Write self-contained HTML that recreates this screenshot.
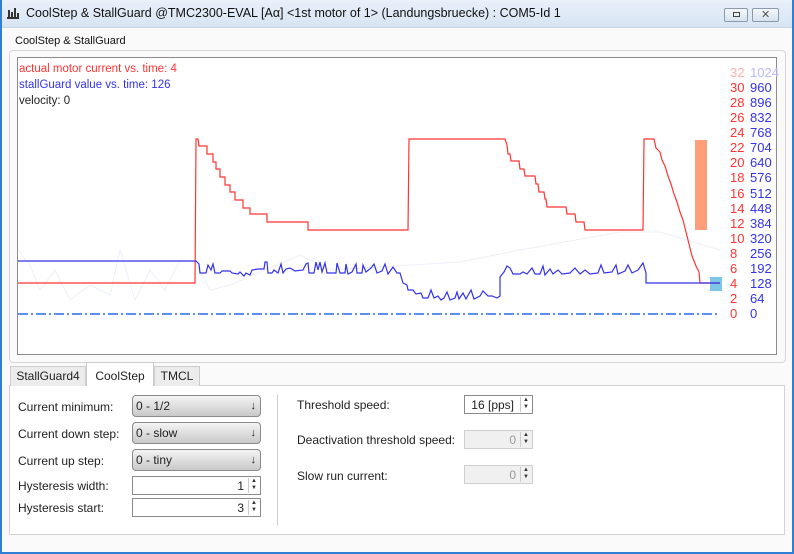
<!DOCTYPE html>
<html><head><meta charset="utf-8"><style>
*{margin:0;padding:0;box-sizing:border-box}
body{width:794px;height:554px;overflow:hidden;background:#fafafa;font-family:"Liberation Sans","DejaVu Sans",sans-serif;font-size:12px;color:#222;position:relative}
.abs{position:absolute}
.title{left:0;top:0;width:794px;height:28px;background:linear-gradient(#e9f1fa,#d7e4f3);border-bottom:1px solid #c9d6e6}
.win{left:0;top:0;width:794px;height:554px;border:2px solid #2f7fd6;border-top:none;pointer-events:none}
.btn{top:8px;width:24px;height:14px;border:1px solid #8a99ad;border-radius:2px;background:linear-gradient(#f4f7fb,#d8e2ee)}
.group{left:9px;top:50px;width:777px;height:313px;border:1px solid #d6d6d6;border-radius:4px}
.chart{left:17px;top:57px;width:760px;height:298px;background:#fff;border:1px solid #8c8c8c}
.tab{top:366px;height:20px;border:1px solid #ccc;border-bottom:none;background:#ececec;font-size:12px;text-align:center;line-height:19px}
.panel{left:9px;top:385px;width:776px;height:150px;border:1px solid #d3d3d3;background:#fff}
.lbl{font-size:12px;color:#222}
.combo{width:129px;height:22px;border:1px solid #8a8a8a;border-radius:4px;background:linear-gradient(#f4f4f4,#c9c9c9);font-size:12px;padding:3px 0 0 3px}
.combo:after{content:"↓";position:absolute;right:4px;top:4px;font-size:11px;font-weight:bold}
.spin{height:19px;border:1px solid #8a8a8a;background:#fff;font-size:12px;text-align:right;padding:2px 16px 0 0}
.spin.dis{border-color:#cfcfcf;background:#f0f0f0;color:#999}
.arr{position:absolute;right:1px;top:1px;width:11px;height:15px;border-left:1px solid #ccc;font-size:6px;line-height:7px;text-align:center;color:#333}
.col{line-height:15.07px;font-size:13px}
</style></head><body>
<div class="abs title"></div>
<div class="abs" style="left:7px;top:7px;width:12px;height:12px;">
<svg width="12" height="12"><rect x="0" y="10" width="12" height="2" fill="#333"/><rect x="1" y="3" width="2" height="7" fill="#333"/><rect x="4" y="5" width="2" height="5" fill="#333"/><rect x="7" y="1" width="2" height="9" fill="#333"/><rect x="10" y="6" width="2" height="4" fill="#333"/></svg></div>
<div class="abs" style="left:26px;top:6px;font-size:12.5px;color:#111">CoolStep &amp; StallGuard @TMC2300-EVAL [Aα] &lt;1st motor of 1&gt; (Landungsbruecke) : COM5-Id 1</div>
<div class="abs btn" style="left:724px"><div class="abs" style="left:8px;top:3px;width:7px;height:5px;border:1px solid #444"></div></div>
<div class="abs btn" style="left:752px;width:27px"><div class="abs" style="left:8px;top:-1px;font-size:11px;color:#555">✕</div></div>
<div class="abs" style="left:15px;top:35px;font-size:11px;color:#111">CoolStep &amp; StallGuard</div>
<div class="abs group"></div>
<div class="abs chart"></div>
<svg class="abs" style="left:0;top:0" width="794" height="554">
<polyline fill="none" stroke="#eef0fa" stroke-width="1" points="18,250 30,265 40,290 55,270 70,300 90,285 110,295 120,250 135,300 150,270 165,290 180,260 195,262 210,290 230,285 300,255 330,270 460,262 520,250 620,232 660,232 720,250"/>
<polyline fill="none" stroke="#5b8ff0" stroke-width="2" stroke-dasharray="10,3,2,3" points="18,314 720,314"/>
<rect x="695" y="140" width="12" height="90" fill="#ff9e7a"/>
<rect x="710" y="277" width="12" height="14" fill="#7cc6e8"/>
<polyline fill="none" stroke="#ff3333" stroke-width="1.2" points="18,283 195,283 196,139 198,139 199,146 207,146 207,154 213,154 213,162 216,162 216,169 220,169 220,177 225,177 225,185 230,185 230,192 235,192 235,200 243,200 243,208 250,208 250,214 267,214 267,222 308,222 308,230 408,230 409,139 505,139 507,145 508,154 510,154 511,161 519,161 520,169 524,169 525,176 535,176 536,184 538,184 539,192 544,192 545,199 546,199 547,207 566,207 567,214 575,214 576,222 584,222 585,230 643,230 644,139 654,139 656,148 660,152 662,160 665,166 668,176 671,184 674,194 677,202 680,212 683,220 686,232 689,244 692,256 696,266 699,272 700,283 720,283"/>
<polyline fill="none" stroke="#3333ee" stroke-width="1.2" points="18,261 196,261 199,264 200,273 206,273 208,265 211,270 213,264 215,273 220,273 222,271 230,271 232,273 238,274 240,272 244,276 246,273 250,275 252,270 258,269 264,269 265,262 267,262 268,273 272,273 274,270 278,273 281,264 283,273 286,269 290,268 295,271 303,270 306,264 308,263 309,273 314,273 316,262 318,270 320,262 322,272 325,263 327,273 336,273 337,263 340,273 345,273 346,264 348,274 352,272 356,264 357,273 362,273 363,265 366,272 371,268 374,264 377,273 382,271 385,264 388,274 393,267 397,273 400,273 403,283 407,285 408,290 413,290 416,294 421,293 423,298 428,298 431,290 434,298 438,296 441,300 444,298 447,292 450,300 455,298 457,292 459,299 463,293 466,299 471,290 474,299 480,296 483,291 488,296 492,296 497,298 500,296 500,277 504,272 507,266 510,268 513,274 520,274 523,272 527,274 532,268 535,274 540,274 543,266 545,275 550,269 553,274 558,270 562,274 570,273 575,268 580,274 585,270 590,274 598,273 601,265 604,273 612,272 616,265 618,274 625,271 628,265 632,273 638,270 643,263 646,273 646,283 720,283"/>
</svg>
<div class="abs" style="left:19px;top:61px;line-height:16px;font-size:11.5px">
<div style="color:#ff3333">actual motor current vs. time: 4</div>
<div style="color:#3333ee">stallGuard value vs. time: 126</div>
<div style="color:#222">velocity: 0</div></div>
<div class="abs col" style="left:730px;top:65px;color:#f33">
<div style="color:#ffb0b0">32</div><div>30</div><div>28</div><div>26</div><div>24</div><div>22</div><div>20</div><div>18</div><div>16</div><div>14</div><div>12</div><div>10</div><div>8</div><div>6</div><div>4</div><div>2</div><div>0</div></div>
<div class="abs col" style="left:750px;top:65px;color:#3333ee">
<div style="color:#b8b8f0">1024</div><div>960</div><div>896</div><div>832</div><div>768</div><div>704</div><div>640</div><div>576</div><div>512</div><div>448</div><div>384</div><div>320</div><div>256</div><div>192</div><div>128</div><div>64</div><div>0</div></div>
<div class="abs panel"></div>
<div class="abs tab" style="left:10px;width:76px">StallGuard4</div>
<div class="abs tab" style="left:86px;top:362px;height:24px;width:68px;background:#fff;line-height:26px">CoolStep</div>
<div class="abs tab" style="left:154px;width:46px">TMCL</div>
<div class="abs lbl" style="left:18px;top:400px">Current minimum:</div>
<div class="abs lbl" style="left:18px;top:427px">Current down step:</div>
<div class="abs lbl" style="left:18px;top:454px">Current up step:</div>
<div class="abs lbl" style="left:18px;top:479px">Hysteresis width:</div>
<div class="abs lbl" style="left:18px;top:501px">Hysteresis start:</div>
<div class="abs combo" style="left:132px;top:395px">0 - 1/2</div>
<div class="abs combo" style="left:132px;top:422px">0 - slow</div>
<div class="abs combo" style="left:132px;top:449px">0 - tiny</div>
<div class="abs spin" style="left:132px;top:476px;width:129px">1<div class="arr">▲<br>▼</div></div>
<div class="abs spin" style="left:132px;top:498px;width:129px">3<div class="arr">▲<br>▼</div></div>
<div class="abs" style="left:277px;top:395px;width:1px;height:130px;background:#ccc"></div>
<div class="abs lbl" style="left:297px;top:398px">Threshold speed:</div>
<div class="abs lbl" style="left:297px;top:433px">Deactivation threshold speed:</div>
<div class="abs lbl" style="left:297px;top:469px">Slow run current:</div>
<div class="abs spin" style="left:464px;top:395px;width:69px;padding-right:18px">16 [pps]<div class="arr">▲<br>▼</div></div>
<div class="abs spin dis" style="left:464px;top:430px;width:69px">0<div class="arr">▲<br>▼</div></div>
<div class="abs spin dis" style="left:464px;top:465px;width:69px">0<div class="arr">▲<br>▼</div></div>
<div class="abs win"></div>
</body></html>
